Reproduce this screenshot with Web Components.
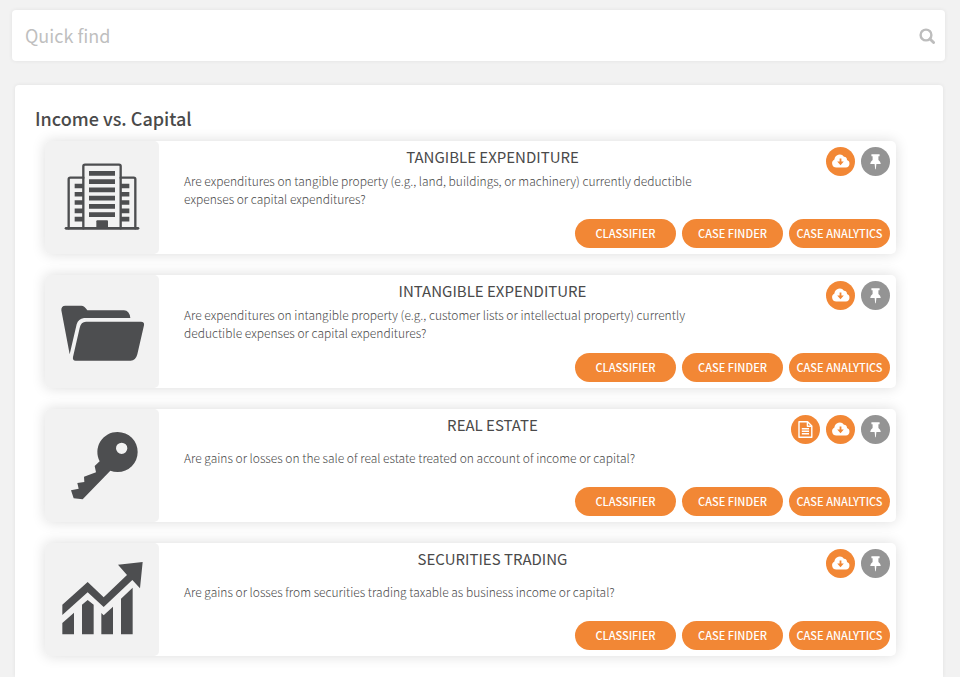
<!DOCTYPE html>
<html lang="en">

<head>
    <meta charset="UTF-8">
    <meta name="viewport" content="width=device-width, initial-scale=1.0">
    <title>Income vs. Capital</title>
    <style>
        :root {
            --orange: #f28735;
            --grey: #949494;
            --dark: #4d4e50;
            --pane: #f2f2f2;
        }

        body {
            box-sizing: border-box;
            min-height: 100vh;
            margin: 0;
            padding: 10px 15px 0 12px;
            display: flex;
            flex-direction: column;
            gap: 24px;
            background: #f2f2f2;
            color: #4a4a4a;
            font-family: "Noto Sans CJK SC", "Noto Sans", sans-serif;
        }
    </style>
</head>

<body>
    <quick-find></quick-find>

    <topic-panel heading="Income vs. Capital">
        <topic-card heading="TANGIBLE EXPENDITURE" icon="building">
            Are expenditures on tangible property (e.g., land, buildings, or machinery) currently deductible expenses or capital expenditures?
        </topic-card>
        <topic-card heading="INTANGIBLE EXPENDITURE" icon="folder">
            Are expenditures on intangible property (e.g., customer lists or intellectual property) currently deductible expenses or capital expenditures?
        </topic-card>
        <topic-card heading="REAL ESTATE" icon="key">
            Are gains or losses on the sale of real estate treated on account of income or capital?
            <round-button slot="actions" icon="file" label="Document"></round-button>
        </topic-card>
        <topic-card heading="SECURITIES TRADING" icon="chart">
            Are gains or losses from securities trading taxable as business income or capital?
        </topic-card>
    </topic-panel>

    <!-- search bar -->
    <template id="findTemplate">
        <style>
            :host {
                display: block;
            }

            form {
                box-sizing: border-box;
                height: 51px;
                display: flex;
                align-items: center;
                padding: 0 10px 0 13px;
                background: #fff;
                border-radius: 4px;
                box-shadow: 0 0 4px rgba(0, 0, 0, .07);
            }

            input {
                flex: 1;
                min-width: 0;
                padding: 0 0 2px;
                border: none;
                outline: none;
                background: none;
                color: inherit;
                font: 18px/30px "Noto Sans CJK SC", "Noto Sans", sans-serif;
            }

            input::placeholder {
                color: #bfbfbf;
            }

            button {
                padding: 0;
                border: none;
                background: none;
                color: #bdbdbd;
                cursor: pointer;
            }

            svg {
                display: block;
            }
        </style>
        <form>
            <input type="text" placeholder="Quick find" aria-label="Quick find">
            <button type="button" aria-label="Search">
                <svg width="16" height="16" viewBox="0 0 16 16" fill="none" stroke="currentColor">
                    <circle cx="7" cy="7" r="5.4" stroke-width="2.4" />
                    <path d="M11 11l3.6 3.6" stroke-width="2.8" stroke-linecap="round" />
                </svg>
            </button>
        </form>
    </template>

    <!-- white panel with a list of cards -->
    <template id="panelTemplate">
        <style>
            :host {
                flex: 1;
                display: block;
                margin: 0 2px 0 3px;
                padding: 21px 47px 20px 20px;
                background: #fff;
                border-radius: 4px 4px 0 0;
                box-shadow: 0 0 4px rgba(0, 0, 0, .07);
            }

            h2 {
                margin: 0 0 11px;
                font-size: 18px;
                line-height: 24px;
                font-weight: 500;
            }

            .list {
                display: flex;
                flex-direction: column;
                gap: 21px;
                margin-left: 10px;
            }
        </style>
        <h2></h2>
        <div class="list">
            <slot></slot>
        </div>
    </template>

    <template id="cardTemplate">
        <style>
            :host {
                display: flex;
                background: #fff;
                border-radius: 5px;
                box-shadow: 0 0 14px rgba(0, 0, 0, .14);
            }

            .pane {
                flex: none;
                width: 114px;
                height: 113px;
                border-radius: 5px;
                background: var(--pane);
                color: var(--dark);
            }

            .pane svg {
                display: block;
                width: 100%;
                height: 100%;
            }

            .body {
                flex: 1;
                min-width: 0;
                display: flex;
                flex-direction: column;
                justify-content: space-between;
                padding: 6px 6px 6px 0;
            }

            .top {
                display: flex;
            }

            .text {
                flex: 1;
                min-width: 0;
            }

            h3 {
                margin: 0;
                font-size: 15px;
                line-height: 20px;
                font-weight: 400;
                text-align: center;
            }

            .question {
                box-sizing: border-box;
                max-width: 560px;
                min-height: 36px;
                margin-top: 5px;
                padding-left: 25px;
                display: flex;
                align-items: center;
                font-size: 12px;
                line-height: 18px;
                font-weight: 300;
            }

            /* room for two buttons, a third one grows to the left */
            .actions {
                flex: none;
                width: 64px;
                height: 29px;
                display: flex;
                justify-content: flex-end;
                gap: 6px;
            }

            .links {
                display: flex;
                justify-content: flex-end;
                gap: 6px;
            }
        </style>
        <div class="pane"></div>
        <div class="body">
            <div class="top">
                <div class="text">
                    <h3></h3>
                    <div class="question">
                        <div><slot></slot></div>
                    </div>
                </div>
                <div class="actions">
                    <slot name="actions"></slot>
                    <round-button icon="cloud" label="Download"></round-button>
                    <round-button icon="pin" label="Pin" color="grey"></round-button>
                </div>
            </div>
            <div class="links">
                <pill-button>CLASSIFIER</pill-button>
                <pill-button>CASE FINDER</pill-button>
                <pill-button>CASE ANALYTICS</pill-button>
            </div>
        </div>
    </template>

    <template id="roundTemplate">
        <style>
            :host {
                display: block;
                flex: none;
            }

            button {
                display: block;
                width: 29px;
                height: 29px;
                padding: 0;
                border: none;
                border-radius: 50%;
                background: var(--orange);
                color: #fff;
                cursor: pointer;
            }

            :host([color="grey"]) button {
                background: var(--grey);
            }

            svg {
                display: block;
            }
        </style>
        <button type="button"></button>
    </template>

    <template id="pillTemplate">
        <style>
            :host {
                display: block;
            }

            button {
                display: block;
                width: 101px;
                height: 29px;
                padding: 0 0 2px;
                border: none;
                border-radius: 15px;
                background: var(--orange);
                color: #fff;
                font-family: inherit;
                font-size: 11px;
                font-weight: 500;
                line-height: 26px;
                white-space: nowrap;
                cursor: pointer;
            }
        </style>
        <button type="button">
            <slot></slot>
        </button>
    </template>

    <script>
        // one row of bars for each floor
        const floors = (x, y, width, count) => {
            let d = '';
            for (let i = 0; i < count; i++) {
                d += `M${x} ${y + i * 24.8}h${width}v14h-${width}z`;
            }
            return d;
        }

        const pictures = {
            building: `
                <svg viewBox="45 33 342 339" fill="currentColor">
                    <g fill="none" stroke="currentColor" stroke-width="7" stroke-linecap="round">
                        <path d="M160 295V109q0-5 5-5h102q5 0 5 5V295" />
                        <path d="M160 143H121q-5 0-5 5V295M272 143h39q5 0 5 5V295" />
                        <path d="M108 295H324" stroke-width="8" />
                    </g>
                    <path d="${floors(177, 123, 78, 6)}" />
                    <path d="${floors(134, 161, 26, 5)}${floors(272, 161, 26, 5)}" />
                    <rect x="199" y="271" width="35" height="24" rx="3" />
                </svg>`,
            folder: `
                <svg viewBox="45 30 342 339" fill="currentColor">
                    <path d="M119 268L94 136Q93 122 106 122H154Q164 122 172 136H282Q298 136 301 159H162Q145 161 140 178Z" />
                    <path d="M168 170H333Q344 170 342 181L322 268Q317 287 302 287H137Q127 287 129 276L149 189Q153 170 168 170Z" />
                </svg>`,
            key: `
                <svg viewBox="45 27 342 339" fill="currentColor">
                    <path fill-rule="evenodd" d="M263 96a60 60 0 1 1 0 120q-12 0-22-4L158 298 131 295 123 271 146 266 142 249 163 246 162 230 198 217 194 198 209 184A60 60 0 0 1 263 96ZM275 128a17 17 0 1 0 0 34a17 17 0 1 0 0-34Z" />
                </svg>`,
            chart: `
                <svg viewBox="45 24 342 339" fill="currentColor">
                    <path d="M97 209L173 141 221 187 291 120 264 89 338 81 330 160 307 135 221 216 173 172 97 240Z" />
                    <path d="M97 264L132 233V298H97ZM156 209L173 195 191 209V298H156ZM214 234L221 241 249 215V298H214ZM273 191L308 158V298H273Z" />
                </svg>`
        }

        const glyphs = {
            cloud: `
                <path fill="#fff" d="M10.3 20.5A4.3 4.3 0 0 1 8.4 12.4 5.4 5.4 0 0 1 18 9.7 3.2 3.2 0 0 1 21 13 3.9 3.9 0 0 1 20 20.5Z" />
                <path fill="var(--orange)" d="M13.6 11.4H15.4V14.6H17.8L14.5 18.2 11.2 14.6H13.6Z" />`,
            pin: `
                <path fill="#fff" d="M10.4 7.2H18.6V9.3H17.4V13.1Q19.6 14.4 19.8 17H15.4L14.8 22.2H14.2L13.6 17H9.2Q9.4 14.4 11.6 13.1V9.3H10.4Z" />`,
            file: `
                <g fill="none" stroke="#fff" stroke-width="1.4" stroke-linejoin="round">
                    <path d="M8 6.7H16.6L20.8 10.9V22.2H8Z" />
                    <path d="M16.4 6.9V11.2H20.7" />
                    <path d="M10.8 13.8H18M10.8 16.3H18M10.8 18.8H18" />
                </g>`
        }

        // attach a shadow root and fill it from a template
        class Base extends HTMLElement {
            constructor(id) {
                super();
                const shadow = this.attachShadow({ mode: 'open' });
                shadow.appendChild(document.getElementById(id).content.cloneNode(true));
            }
        }

        class PillButton extends Base {
            constructor() {
                super('pillTemplate');
            }
        }

        class RoundButton extends Base {
            constructor() {
                super('roundTemplate');
            }

            connectedCallback() {
                const btn = this.shadowRoot.querySelector('button');
                btn.setAttribute('aria-label', this.getAttribute('label'));
                btn.innerHTML = `<svg width="29" height="29" viewBox="0 0 29 29">${glyphs[this.getAttribute('icon')]}</svg>`;
            }
        }

        class TopicCard extends Base {
            constructor() {
                super('cardTemplate');
            }

            connectedCallback() {
                this.shadowRoot.querySelector('h3').textContent = this.getAttribute('heading');
                this.shadowRoot.querySelector('.pane').innerHTML = pictures[this.getAttribute('icon')];
            }
        }

        class TopicPanel extends Base {
            constructor() {
                super('panelTemplate');
            }

            connectedCallback() {
                this.shadowRoot.querySelector('h2').textContent = this.getAttribute('heading');
            }
        }

        class QuickFind extends Base {
            constructor() {
                super('findTemplate');
            }
        }

        customElements.define('pill-button', PillButton);
        customElements.define('round-button', RoundButton);
        customElements.define('topic-card', TopicCard);
        customElements.define('topic-panel', TopicPanel);
        customElements.define('quick-find', QuickFind);
    </script>
</body>

</html>
